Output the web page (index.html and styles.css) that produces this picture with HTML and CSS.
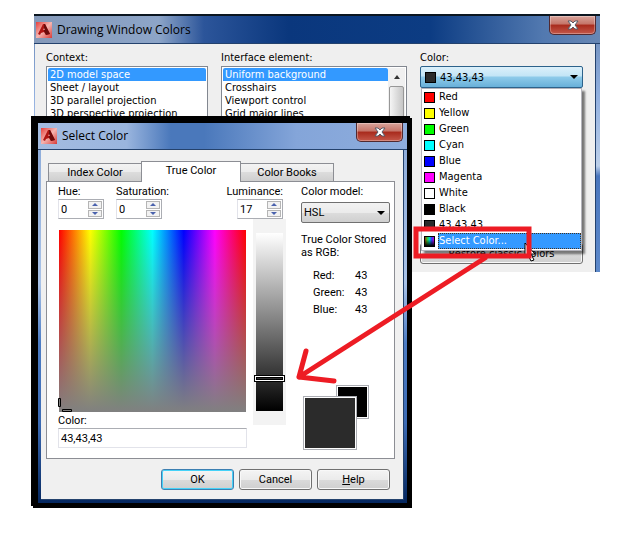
FILE: index.html
```html
<!DOCTYPE html>
<html lang="en">
<head>
    <meta charset="UTF-8">
    <meta name="viewport" content="width=device-width, initial-scale=1.0">
    <title>Drawing Window Colors</title>
    <link rel="stylesheet" href="styles.css">
</head>
<body>
    <div class="desktop">
        <section class="window">
            <header class="titlebar">
                <svg class="logo" viewBox="0 0 16 16">
                    <defs>
                        <linearGradient id="logo-bg" x1="0" y1="0" x2="1" y2="1">
                            <stop offset="0" stop-color="#e8403c"/>
                            <stop offset="0.5" stop-color="#f5b5b0"/>
                            <stop offset="1" stop-color="#d83a36"/>
                        </linearGradient>
                    </defs>
                    <rect width="16" height="16" fill="url(#logo-bg)"/>
                    <path d="M2 12L7 2h2l5 10-4 1-2-3-3 1-1 2z" fill="#b01513"/>
                    <path d="M8 2h1l5 10-4 1-2-4z" fill="#6b0c0c"/>
                    <path d="M7 8l1-2 1 2z" fill="#e88"/>
                </svg>
                <h1>Drawing Window Colors</h1>
                <button class="close" aria-label="Close">
                    <svg viewBox="0 0 12 10"><path d="M1 1h3l2 2 2-2h3L8 5l3 4H8L6 7 4 9H1l3-4z" fill="#fff" stroke="#565b68"/></svg>
                </button>
            </header>
            <div class="window-body">
                <div class="column">
                    <label for="context">Context:</label>
                    <div class="listbox">
                        <select id="context" size="12">
                            <option selected>2D model space</option>
                            <option>Sheet / layout</option>
                            <option>3D parallel projection</option>
                            <option>3D perspective projection</option>
                            <option>Block editor</option>
                        </select>
                    </div>
                </div>
                <div class="column">
                    <label for="element">Interface element:</label>
                    <div class="listbox">
                        <select id="element" size="12">
                            <option selected>Uniform background</option>
                            <option>Crosshairs</option>
                            <option>Viewport control</option>
                            <option>Grid major lines</option>
                            <option>Grid minor lines</option>
                        </select>
                        <div class="scrollbar"><i class="arrow-up"></i><span class="thumb"></span></div>
                    </div>
                </div>
                <div class="column">
                    <label for="color">Color:</label>
                    <div class="combo combo-color">
                        <i class="swatch"></i>
                        <select id="color"><option>43,43,43</option></select>
                        <div class="menu" role="listbox">
                            <div class="item" role="option"><i class="swatch red"></i><span>Red</span></div>
                            <div class="item" role="option"><i class="swatch yellow"></i><span>Yellow</span></div>
                            <div class="item" role="option"><i class="swatch green"></i><span>Green</span></div>
                            <div class="item" role="option"><i class="swatch cyan"></i><span>Cyan</span></div>
                            <div class="item" role="option"><i class="swatch blue"></i><span>Blue</span></div>
                            <div class="item" role="option"><i class="swatch magenta"></i><span>Magenta</span></div>
                            <div class="item" role="option"><i class="swatch white"></i><span>White</span></div>
                            <div class="item" role="option"><i class="swatch black"></i><span>Black</span></div>
                            <div class="item" role="option"><i class="swatch"></i><span>43,43,43</span></div>
                            <div class="item active" role="option"><i class="swatch spectrum"></i><span>Select Color...</span></div>
                        </div>
                    </div>
                    <button class="button restore">Restore classic colors</button>
                </div>
            </div>
        </section>

        <section class="dialog">
            <header class="titlebar">
                <svg class="logo" viewBox="0 0 16 16">
                    <rect width="16" height="16" fill="url(#logo-bg)"/>
                    <path d="M2 12L7 2h2l5 10-4 1-2-3-3 1-1 2z" fill="#b01513"/>
                    <path d="M8 2h1l5 10-4 1-2-4z" fill="#6b0c0c"/>
                    <path d="M7 8l1-2 1 2z" fill="#e88"/>
                </svg>
                <h1>Select Color</h1>
                <button class="close" aria-label="Close">
                    <svg viewBox="0 0 12 10"><path d="M1 1h3l2 2 2-2h3L8 5l3 4H8L6 7 4 9H1l3-4z" fill="#fff" stroke="#565b68"/></svg>
                </button>
            </header>
            <div class="dialog-body">
                <div class="tabs" role="tablist">
                    <button role="tab">Index Color</button>
                    <button role="tab" class="selected" aria-selected="true">True Color</button>
                    <button role="tab">Color Books</button>
                </div>
                <div class="panel">
                    <div class="picker">
                        <div class="fields">
                            <div class="field">
                                <label for="hue">Hue:</label>
                                <div class="spinner">
                                    <input id="hue" type="number" value="0">
                                    <div class="steps"><button aria-label="Hue up"></button><button class="down" aria-label="Hue down"></button></div>
                                </div>
                            </div>
                            <div class="field">
                                <label for="saturation">Saturation:</label>
                                <div class="spinner">
                                    <input id="saturation" type="number" value="0">
                                    <div class="steps"><button aria-label="Saturation up"></button><button class="down" aria-label="Saturation down"></button></div>
                                </div>
                            </div>
                            <div class="field luminance">
                                <label for="luminance">Luminance:</label>
                                <div class="spinner">
                                    <input id="luminance" type="number" value="17">
                                    <div class="steps"><button aria-label="Luminance up"></button><button class="down" aria-label="Luminance down"></button></div>
                                </div>
                            </div>
                        </div>
                        <div class="maps">
                            <div class="hue-column">
                                <div class="hue-map">
                                    <svg class="cursor" viewBox="0 0 14 14">
                                        <path d="M0.5 0.5h2v8h-2zM4.5 11.5h9v2h-9z" fill="#808080" stroke="#000"/>
                                    </svg>
                                </div>
                                <label for="rgb">Color:</label>
                                <input id="rgb" class="rgb" type="text" value="43,43,43">
                            </div>
                            <div class="lum-track">
                                <div class="lum-bar"><span class="lum-thumb"></span></div>
                            </div>
                        </div>
                    </div>
                    <div class="side">
                        <label for="model">Color model:</label>
                        <div class="combo">
                            <select id="model"><option>HSL</option></select>
                        </div>
                        <p>True Color Stored as RGB:</p>
                        <dl>
                            <dt>Red:</dt><dd>43</dd>
                            <dt>Green:</dt><dd>43</dd>
                            <dt>Blue:</dt><dd>43</dd>
                        </dl>
                        <div class="preview">
                            <span class="old"></span>
                            <span class="new"></span>
                        </div>
                    </div>
                </div>
                <footer>
                    <button class="button default">OK</button>
                    <button class="button">Cancel</button>
                    <button class="button"><u>H</u>elp</button>
                </footer>
            </div>
        </section>

        <!-- pointer, highlight box and arrow drawn over the windows -->
        <svg class="markup" width="632" height="546" viewBox="0 0 632 546">
            <path d="M525 243v15l3-3 3 6 3-1-3-6h4z" fill="#fff" stroke="#000"/>
            <g fill="none" stroke="#ed1c24" stroke-width="5">
                <rect x="416" y="229" width="113" height="27"/>
                <path d="M485 258L299 377M306 351l-7 26 35 4" stroke-linecap="round" stroke-linejoin="round"/>
            </g>
        </svg>
    </div>
</body>
</html>
```
FILE: styles.css
```css
* {
    box-sizing: border-box;
}
body {
    margin: 0;
    background: #fff;
    color: #000;
    font: 11px/13px "DejaVu Sans Condensed", "DejaVu Sans", sans-serif;
}
button, input, select {
    font: inherit;
    color: inherit;
    margin: 0;
    padding: 0;
}
h1, p, dl, dd {
    margin: 0;
}
.desktop {
    position: relative;
    min-height: 100vh;
    padding: 14px 32px 0 34px;
    overflow: hidden;
}

/* windows */
.window {
    padding: 0 4px 0 1px;
    border-top: 2px solid #0b1620;
    background: linear-gradient(#6887b4, #92b0df 80px, #bccfe9 150px, #4a76bd 160px, #5d89ca);
}
.titlebar {
    display: flex;
    align-items: center;
    gap: 5px;
}
.titlebar h1 {
    flex: 1;
    font: 12px/16px "Open Sans", "Noto Sans", sans-serif;
}
.window > .titlebar {
    height: 28px;
    margin: 0 -4px 0 -1px;
    padding: 0 4px 0 2px;
    border-bottom: 1px solid #24426d;
    background: linear-gradient(90deg, #8499b9, #8da5c8 22%, #2c559a 30%, #0a377d 45%, #0c3c83 70%, #5279b0 90%, #6887b4);
}
.logo {
    width: 16px;
    height: 16px;
}
.close {
    align-self: flex-start;
    display: flex;
    justify-content: center;
    align-items: center;
    width: 47px;
    height: 19px;
    border: 1px solid #512930;
    border-top: 0;
    border-radius: 0 0 5px 5px;
    background: linear-gradient(#d8a49b, #c57468 45%, #a82a1c 50%, #c4584a);
    box-shadow: inset 0 0 0 1px rgba(255, 255, 255, 0.3);
}
.close svg {
    width: 12px;
    height: 10px;
}
.window-body {
    display: grid;
    grid-template-columns: 162fr 186fr 163fr;
    gap: 13px;
    height: 228px;
    padding: 7px 12px 8px 11px;
    border-right: 1px solid #24426d;
    background: #efefef;
}
.column {
    display: flex;
    flex-direction: column;
    min-width: 0;
}
.column > label {
    height: 15px;
}
.listbox {
    display: flex;
    flex: 1;
    min-height: 0;
    padding: 1px;
    border: 1px solid #828790;
    background: #fff;
}
.listbox select {
    flex: 1;
    min-width: 0;
    border: 0;
    outline: 0;
    overflow: hidden;
    background: #fff;
}
.listbox option {
    min-height: 13px;
    padding: 0 2px;
}
.listbox option:checked {
    background: linear-gradient(#39f, #39f);
    color: #fff;
}
.scrollbar {
    display: flex;
    flex-direction: column;
    align-items: center;
    width: 17px;
    background: #f0f0f0;
}
.arrow-up {
    margin: 7px 0;
    border: 3px solid transparent;
    border-top: 0;
    border-bottom: 4px solid #333;
}
.thumb {
    width: 15px;
    height: 60px;
    border: 1px solid #979797;
    border-radius: 2px;
    background: linear-gradient(90deg, #f5f5f5, #ddd 50%, #c6c6c6);
}

/* combo boxes */
.combo {
    position: relative;
    display: flex;
    align-items: center;
    height: 21px;
    border: 1px solid #707070;
    border-radius: 2px;
    background: linear-gradient(#f2f2f2, #ebebeb 50%, #ddd 50%, #cfcfcf);
}
.combo::after {
    content: "";
    position: absolute;
    right: 4px;
    border: 4px solid transparent;
    border-top-color: #000;
    border-bottom: 0;
}
.combo select {
    flex: 1;
    align-self: stretch;
    appearance: none;
    padding: 0 2px;
    border: 0;
    background: none;
}
.combo-color {
    height: 22px;
    padding-left: 4px;
    border-color: #2c628b;
    background: linear-gradient(#dcf0fa, #c3e5f6 45%, #8fcbea 50%, #68b0d9);
}
.combo-color select {
    padding: 0 4px;
}
.swatch {
    width: 11px;
    height: 11px;
    border: 1px solid #000;
    background: #2b2b2b;
}
.red { background: #f00; }
.yellow { background: #ff0; }
.green { background: #0f0; }
.cyan { background: #0ff; }
.blue { background: #00f; }
.magenta { background: #f0f; }
.white { background: #fff; }
.black { background: #000; }
.spectrum {
    background: linear-gradient(transparent 30%, #000), linear-gradient(90deg, #930, #3c3, #0cc, #33f, #c0c);
}
.menu {
    position: absolute;
    z-index: 1;
    top: 21px;
    left: 0;
    right: 0;
    padding: 0 0 1px 2px;
    border: 1px solid #b4b4bc;
    background: #fff;
    box-shadow: 3px 3px 2px rgba(0, 0, 0, 0.5);
}
.item {
    display: flex;
    align-items: center;
    gap: 3px;
    height: 16px;
}
.item span {
    flex: 1;
    padding: 0 1px;
    line-height: 16px;
}
.item.active span {
    background: #39f;
    color: #fff;
    outline: 1px dotted #432;
    outline-offset: -1px;
}
.button {
    height: 21px;
    border: 1px solid #707070;
    border-radius: 3px;
    background: linear-gradient(#f4f4f4, #ebebeb 50%, #dbdbdb 50%, #cfcfcf);
    box-shadow: inset 0 0 0 1px #f8f8f8;
}
.restore {
    margin-top: auto;
}

/* select color dialog */
.dialog {
    position: absolute;
    top: 118px;
    left: 33px;
    width: 379px;
    padding: 0 3px 3px;
    border: 5px solid #000;
    background: linear-gradient(#8aa9d8, #a9c3e8 160px, #4c7cc4 220px, #3c6bb4 300px, #05275f);
    box-shadow: -2px -2px 0 #000;
    font: 11px/13px Roboto, "Liberation Sans", sans-serif;
}
.dialog > .titlebar {
    height: 27px;
    margin: 0 -3px;
    padding: 0 4px 0 3px;
    border-bottom: 1px solid #24426d;
    background: linear-gradient(90deg, #a4bce0, #9ab5de 24%, #4a78bb 36%, #4a78bb 45%, #84a5d9 70%, #8eaddd);
}
.dialog-body {
    padding: 11px 8px 9px 5px;
    border: solid #24426d;
    border-width: 0 1px 1px 0;
    background: #f0f0f0;
}
.tabs {
    display: flex;
    align-items: flex-end;
    height: 20px;
    padding-left: 2px;
}
.tabs button {
    width: 94px;
    height: 18px;
    border: 1px solid #8c8e94;
    border-bottom: 0;
    background: linear-gradient(#f3f3f3, #ebebeb 50%, #dcdcdc 50%, #cfcfcf);
}
.tabs .selected {
    position: relative;
    width: 100px;
    height: 21px;
    margin: 0 -1px -1px;
    padding-bottom: 3px;
    background: #fff;
}
.panel {
    display: grid;
    grid-template-columns: 228px 1fr;
    gap: 15px;
    height: 278px;
    padding: 3px 4px 0 11px;
    border: 1px solid #8c8e94;
    background: #fff;
}
.panel label {
    display: block;
    line-height: 14px;
}
.fields {
    display: flex;
    gap: 12px;
}
.field {
    width: 46px;
    white-space: nowrap;
}
.field.luminance {
    display: flex;
    flex-direction: column;
    align-items: flex-end;
    margin: 0 3px 0 auto;
}
.spinner {
    display: flex;
    width: 46px;
    height: 20px;
    border: 1px solid #abadb3;
    border-left-color: #e2e3ea;
    background: #fff;
}
.spinner input {
    flex: 1;
    width: 0;
    padding: 0 2px;
    border: 0;
    appearance: textfield;
    background: none;
}
.spinner input::-webkit-inner-spin-button {
    appearance: none;
}
.steps {
    display: grid;
    gap: 1px;
    width: 16px;
    padding: 1px;
}
.steps button {
    display: grid;
    place-items: center;
    min-height: 0;
    border: 1px solid #b5b5b5;
    background: #f2f2f2;
}
.steps button::before {
    content: "";
    border: 3px solid transparent;
    border-top: 0;
    border-bottom-color: #4a62ad;
}
.steps .down::before {
    border-top: 3px solid #4a62ad;
    border-bottom: 0;
}
.maps {
    display: flex;
    justify-content: space-between;
}
.hue-column {
    width: 189px;
    padding-top: 11px;
}
.hue-map {
    position: relative;
    height: 182px;
    margin: 0 1px 2px;
    background:
        linear-gradient(rgba(128, 128, 128, 0), #808080),
        linear-gradient(90deg, #f00, #ff0, #0f0, #0ff, #00f, #f0f, #f00);
}
.cursor {
    position: absolute;
    left: -1px;
    bottom: 0;
    width: 14px;
    height: 14px;
}
.rgb {
    display: block;
    width: 100%;
    height: 20px;
    padding: 0 2px;
    border: 1px solid #e2e3ea;
    border-top-color: #abadb3;
}
.lum-track {
    width: 33px;
    height: 206px;
    padding: 14px 3px;
    background: #f3f3f3;
}
.lum-bar {
    position: relative;
    height: 178px;
    background: linear-gradient(#fff, #808080 50%, #000);
}
.lum-thumb {
    position: absolute;
    top: 80%;
    left: -2px;
    right: -2px;
    height: 7px;
    border: 1px solid #000;
    box-shadow: inset 0 0 0 1px #fff, inset 0 0 0 2px #000;
}
.side .combo {
    margin: 3px 0 10px;
}
.side dl {
    display: grid;
    grid-template-columns: 30px auto;
    justify-content: start;
    gap: 0 12px;
    margin: 8px 0 0 12px;
    line-height: 17px;
}
.preview {
    display: grid;
    grid-template-columns: 33px 21px 12px;
    grid-template-rows: 11px 23px 31px;
    margin: 67px 0 0 2px;
}
.preview span {
    border: 1px solid #abadb3;
    box-shadow: inset 0 0 0 1px #fff;
}
.old {
    grid-area: 1 / 2 / 3 / 4;
    background: #000;
}
.new {
    grid-area: 2 / 1 / 4 / 3;
    background: #2b2b2b;
}
footer {
    display: flex;
    justify-content: flex-end;
    gap: 5px;
    padding: 10px 5px 0 0;
}
footer .button {
    width: 73px;
}
.button.default {
    border-color: #3c7fb1;
    box-shadow: inset 0 0 0 1px #46d2f8;
}
.markup {
    position: absolute;
    z-index: 2;
    top: 0;
    left: 0;
    pointer-events: none;
}
```
